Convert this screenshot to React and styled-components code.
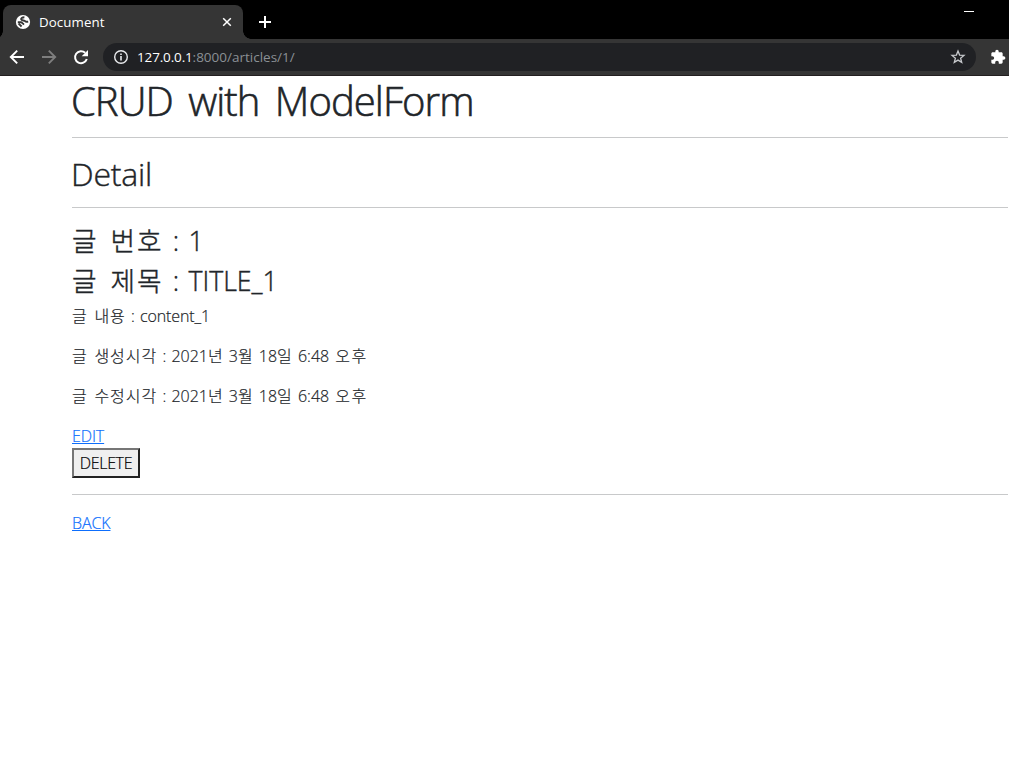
import React from "react";
import styled, { createGlobalStyle } from "styled-components";

const Global = createGlobalStyle`
  * { box-sizing: border-box; }
  html, body { margin: 0; background: #fff; overflow: hidden; }
`;

const Window = styled.div`
  width: 100%;
  height: 757px;
  overflow: hidden;
  background: #fff;
  color: #212529;
  font-family: "Open Sans", "Noto Sans CJK KR", sans-serif;
`;

const TabStrip = styled.div`
  height: 39px;
  padding: 5px 0 0 3px;
  background: #000;
  display: flex;
`;

const Tab = styled.div`
  position: relative;
  width: 240px;
  height: 34px;
  padding: 0 10px 0 12px;
  border-radius: 8px 8px 0 0;
  background: #353535;
  display: flex;
  align-items: center;
  color: #fff;
  &::before, &::after {
    content: "";
    position: absolute;
    bottom: 0;
    width: 8px;
    height: 8px;
  }
  &::before { left: -8px; background: radial-gradient(circle at 0 0, transparent 7.5px, #353535 8px); }
  &::after { right: -8px; background: radial-gradient(circle at 100% 0, transparent 7.5px, #353535 8px); }
`;

const TabTitle = styled.span`
  flex: 1;
  margin-left: 8px;
  font: 13.3px/18px "Open Sans", sans-serif;
  letter-spacing: 0.1px;
`;

const NewTab = styled.div`
  width: 44px;
  height: 34px;
  display: flex;
  align-items: center;
  justify-content: center;
`;

const Minimize = styled.div`
  width: 10px;
  height: 1px;
  margin: 6px 35px 0 auto;
  background: #fff;
`;

const Toolbar = styled.div`
  height: 37px;
  padding: 4px 0 4px 9px;
  background: #353535;
  border-bottom: 1px solid #231f20;
  display: flex;
  align-items: center;
`;

const NavIcon = styled.span`
  width: 16px;
  height: 16px;
  margin-right: ${(p) => p.$gap || 16}px;
  flex: none;
  display: flex;
`;

const AddressBar = styled.div`
  width: 873px;
  height: 28px;
  padding: 0 10px;
  border-radius: 14px;
  background: #202124;
  display: flex;
  align-items: center;
  flex: none;
`;

const Url = styled.span`
  flex: 1;
  margin-left: 8px;
  font: 13.5px/20px "Open Sans", sans-serif;
  color: #8b9095;
  b { font-weight: 400; color: #fff; letter-spacing: -0.15px; }
`;

const ExtIcon = styled.span`
  margin-left: 14px;
  display: flex;
  flex: none;
`;

const Page = styled.main`
  margin-left: 72px;
  margin-right: 1px;
  font-weight: 300;
  -webkit-text-stroke: 0.2px;
`;

const Title = styled.h1`
  height: 61px;
  margin: 0 0 0 -1px;
  font-size: 40px;
  line-height: 50px;
  font-weight: 300;
  letter-spacing: -0.95px;
  word-spacing: 6px;
  white-space: pre;
  -webkit-text-stroke: 0.6px;
`;

const Rule = styled.hr`
  height: 1px;
  margin: 0 0 16px;
  border: 0;
  background: #c8c9ca;
`;

const Subtitle = styled.h2`
  height: 53px;
  margin: 0 0 0 -1px;
  font-size: 32px;
  line-height: 40px;
  font-weight: 300;
  letter-spacing: -0.2px;
  -webkit-text-stroke: 0.4px;
`;

const Heading = styled.h3`
  height: 32px;
  margin: 0 0 8px;
  font-size: 26.7px;
  line-height: 34px;
  font-weight: 300;
  white-space: pre;
  -webkit-text-stroke: 0.4px;
`;

const Line = styled.p`
  height: 24px;
  margin: 0 0 16px;
  font-size: 16px;
  line-height: 24px;
  white-space: pre;
`;

const Run = styled.span`
  letter-spacing: ${(p) => p.$track || 0}px;
  word-spacing: ${(p) => p.$word || 0}px;
`;

const LinkRow = styled.div`
  height: 24px;
  font-size: 16px;
  line-height: 24px;
`;

const Link = styled.a`
  color: #0d6efd;
  letter-spacing: -0.1px;
  text-decoration: underline;
`;

const DeleteButton = styled.button`
  display: block;
  width: 68px;
  height: 30px;
  margin: 0 0 16px;
  padding: 0;
  border: 2px solid;
  border-color: #767676 #212121 #212121 #767676;
  background: #efefef;
  color: #000;
  font: 300 16px/24px "Open Sans", sans-serif;
  letter-spacing: -0.35px;
  -webkit-text-stroke: 0.2px;
`;

const HeadingRow = ({ label, value }) => (
  <Heading>
    <Run $track={2} $word={3}>{label}</Run>
    <Run $word={2.3}>{" : "}</Run>
    <Run>{value}</Run>
  </Heading>
);

const LineLabel = ({ children }) => (
  <>
    <Run $track={1} $word={1.5}>{children}</Run>
    <Run $word={1}>{" : "}</Run>
  </>
);

const DateLine = ({ label }) => (
  <Line>
    <LineLabel>{label}</LineLabel>
    <Run $word={2}>{"2021년 3월 18일 6:48 "}</Run>
    <Run $track={1.5}>오후</Run>
  </Line>
);

export default function App() {
  return (
    <Window>
      <Global />
      <TabStrip>
        <Tab>
          <svg width="16" height="16" viewBox="0 0 16 16">
            <circle cx="8" cy="8" r="7.1" fill="#fff" />
            <path d="M9.4 3.2C7 3.2 5.8 4.300 6.200 5.400C6.700 6.700 9.600 6.200 10.200 7.200C10.700 8 11.800 7.900 13.200 7.600M2.800 8.300H6C7.500 8.300 6.900 10.100 9.200 10.200M3.600 9.600L6.600 12.500" fill="none" stroke="#353535" strokeWidth="1.9" />
          </svg>
          <TabTitle>Document</TabTitle>
          <svg width="12" height="12" viewBox="0 0 12 12" stroke="#fff" strokeWidth="1.5">
            <path d="M2.2 2.2L9.8 9.8M9.8 2.2L2.2 9.8" />
          </svg>
        </Tab>
        <NewTab>
          <svg width="12" height="12" viewBox="0 0 12 12" fill="#fff">
            <path d="M0 5h5V0h2v5h5v2H7v5H5V7H0z" />
          </svg>
        </NewTab>
        <Minimize />
      </TabStrip>
      <Toolbar>
        <NavIcon>
          <svg width="16" height="16" viewBox="0 0 16 16" fill="none" stroke="#fff" strokeWidth="1.9">
            <path d="M15 8H2.5M8.2 1.6L1.8 8L8.2 14.4" />
          </svg>
        </NavIcon>
        <NavIcon>
          <svg width="16" height="16" viewBox="0 0 16 16" fill="none" stroke="#7e7e7e" strokeWidth="1.9">
            <path d="M1 8H13.5M7.8 1.6L14.2 8L7.8 14.4" />
          </svg>
        </NavIcon>
        <NavIcon $gap={14}>
          <svg width="16" height="16" viewBox="0 0 16 16">
            <path d="M13.8 10A6 6 0 1 1 12.2 3.8" fill="none" stroke="#fff" strokeWidth="2" />
            <path d="M15 1v6.3H8.7z" fill="#fff" />
          </svg>
        </NavIcon>
        <AddressBar>
          <svg width="16" height="16" viewBox="0 0 16 16">
            <circle cx="8" cy="8" r="6.3" fill="none" stroke="#e8eaed" strokeWidth="1.4" />
            <path d="M7.2 7h1.6v4.5H7.2zM7.2 4.4h1.6v1.6H7.2z" fill="#e8eaed" />
          </svg>
          <Url><b>127.0.0.1</b>:8000/articles/1/</Url>
          <svg width="16" height="16" viewBox="0 0 16 16" fill="none" stroke="#c8cacd" strokeWidth="1.3">
            <path d="M8 2.1L9.6 6.1L14 6.4L10.6 9.2L11.7 13.4L8 11.1L4.3 13.4L5.4 9.2L2 6.4L6.4 6.1Z" />
          </svg>
        </AddressBar>
        <ExtIcon>
          <svg width="16" height="16" viewBox="0 0 24 24" fill="#fff">
            <path d="M20.5 11H19V7c0-1.1-.9-2-2-2h-4V3.5C13 2.12 11.88 1 10.5 1S8 2.12 8 3.5V5H4c-1.1 0-1.99.9-1.99 2v3.8H3.500c1.490 0 2.700 1.210 2.700 2.700s-1.210 2.700-2.700 2.700H2V20c0 1.100.9 2 2 2h3.800v-1.500c0-1.490 1.210-2.700 2.700-2.700s2.700 1.210 2.700 2.700V22H17c1.100 0 2-.9 2-2v-4h1.500c1.380 0 2.500-1.120 2.500-2.500S21.880 11 20.500 11z" />
          </svg>
        </ExtIcon>
      </Toolbar>
      <Page>
        <Title>CRUD with ModelForm</Title>
        <Rule />
        <Subtitle>Detail</Subtitle>
        <Rule />
        <HeadingRow label="글 번호" value="1" />
        <HeadingRow label="글 제목" value="TITLE_1" />
        <Line><LineLabel>글 내용</LineLabel><Run $track={-0.1}>content_1</Run></Line>
        <DateLine label="글 생성시각" />
        <DateLine label="글 수정시각" />
        <LinkRow><Link>EDIT</Link></LinkRow>
        <DeleteButton>DELETE</DeleteButton>
        <Rule />
        <LinkRow><Link>BACK</Link></LinkRow>
      </Page>
    </Window>
  );
}
